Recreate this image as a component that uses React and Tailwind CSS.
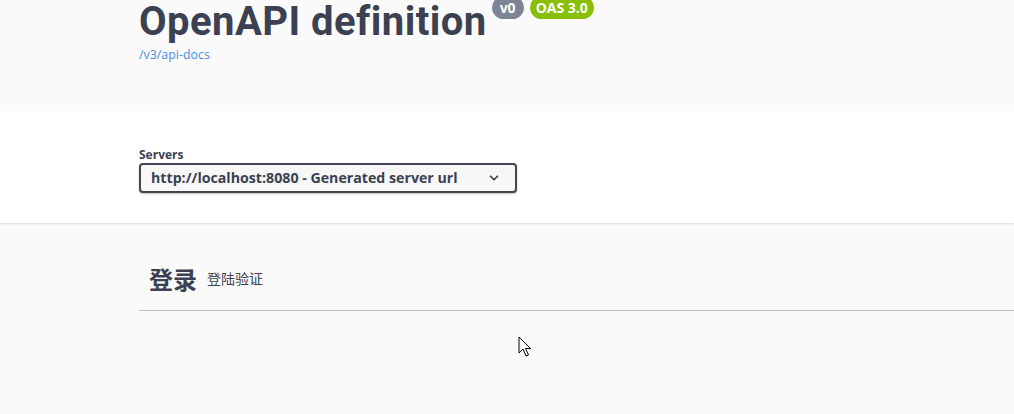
import React from 'react'
import { ChevronDown } from 'lucide-react'

const Cursor = () => (
  <svg className="absolute left-[518px] top-[336px]" width="14" height="22" viewBox="0 0 14 22">
    <path d="M1 1 L1 17 L5 13 L8 20 L10.5 19 L7.5 12.5 L12.5 12.5 Z" fill="#fff" stroke="#000" strokeWidth="1" strokeLinejoin="round" />
  </svg>
)

export default function App() {
  return (
    <div className="relative w-[1014px] h-[414px] overflow-hidden bg-[#fafafa] font-['Open_Sans','Noto_Sans_CJK_SC',sans-serif] text-[#3b4151]">
      {/* Info */}
      <div className="h-[111px] pl-[139px] flex flex-col">
        <div className="flex items-start mt-[-3px]">
          <h2 className="text-[40px] font-bold leading-[49px] tracking-[0.45px] font-['Roboto',sans-serif] text-[#3b4151]">OpenAPI definition</h2>
          <div className="flex gap-[6px] mt-[-1px] ml-[5px]">
            <span className="h-[23px] px-[8px] rounded-full bg-[#7d8492] text-white text-[14px] font-bold leading-[23px]">v0</span>
            <span className="h-[23px] px-[6px] rounded-full bg-[#89bf04] text-white text-[14px] font-bold leading-[23px]">OAS 3.0</span>
          </div>
        </div>
        <a className="block text-[12.4px] leading-[16px] text-[#4990e2] mt-[1px]">/v3/api-docs</a>
      </div>

      {/* Servers */}
      <div className="h-[112px] bg-white shadow-[0_1px_2px_0_rgba(0,0,0,0.15)] pl-[139px] pt-[36px] relative">
        <div className="text-[12px] font-bold leading-[16px] text-[#3b4151]">Servers</div>
        <div className="w-[378px] h-[30px] flex items-center justify-between border-2 border-[#41444e] rounded-[4px] bg-[#f7f7f7] shadow-[0_1px_2px_0_rgba(0,0,0,0.25)] pl-[10px] pr-[14px]">
          <span className="text-[14.2px] font-bold text-[#3b4151]">http://localhost:8080 - Generated server url</span>
          <ChevronDown className="w-[14px] h-[14px] text-[#3b4151]" strokeWidth={3} />
        </div>
      </div>

      {/* Tag section */}
      <div className="pl-[139px] pt-[29px]">
        <div className="flex items-start border-b border-[rgba(59,65,81,0.3)] pl-[10px] pt-[9px] h-[59px]">
          <h3 className="text-[24px] leading-[35px] font-bold font-['Noto_Sans_CJK_SC',sans-serif] text-[#3b4151]">登录</h3>
          <small className="ml-[10px] text-[14px] leading-[35px] font-['Noto_Sans_CJK_SC',sans-serif] text-[#3b4151]">登陆验证</small>
        </div>
      </div>

      <Cursor />
    </div>
  )
}
